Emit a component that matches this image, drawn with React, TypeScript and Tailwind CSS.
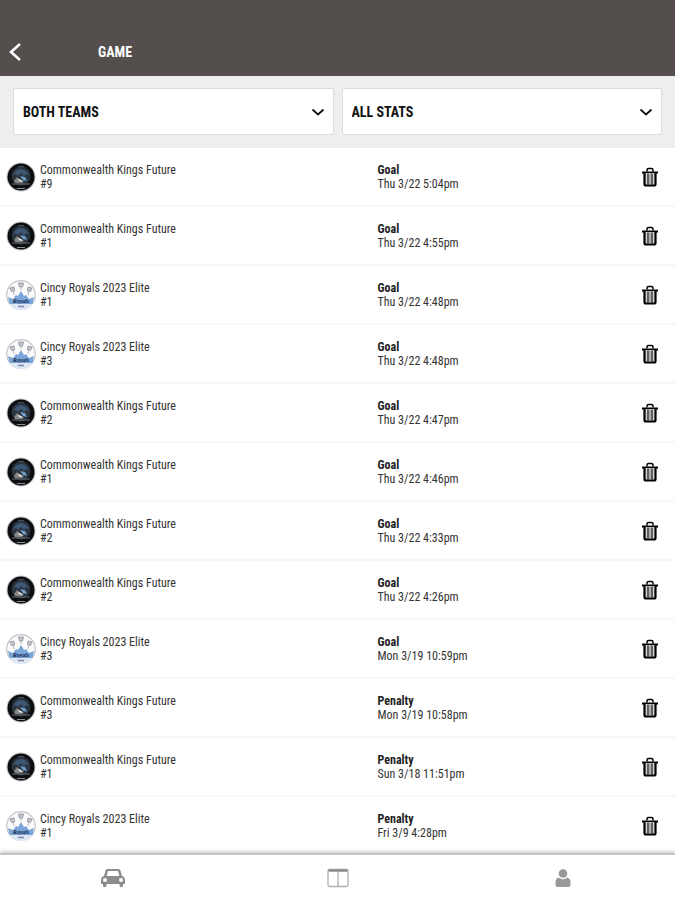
import { useState } from "react";

type Team = "kings" | "royals";

const teamNames = {
  kings: "Commonwealth Kings Future",
  royals: "Cincy Royals 2023 Elite",
};

const initialStats: { id: number; team: Team; player: number; type: string; time: string }[] = [
  { id: 1, team: "kings", player: 9, type: "Goal", time: "Thu 3/22 5:04pm" },
  { id: 2, team: "kings", player: 1, type: "Goal", time: "Thu 3/22 4:55pm" },
  { id: 3, team: "royals", player: 1, type: "Goal", time: "Thu 3/22 4:48pm" },
  { id: 4, team: "royals", player: 3, type: "Goal", time: "Thu 3/22 4:48pm" },
  { id: 5, team: "kings", player: 2, type: "Goal", time: "Thu 3/22 4:47pm" },
  { id: 6, team: "kings", player: 1, type: "Goal", time: "Thu 3/22 4:46pm" },
  { id: 7, team: "kings", player: 2, type: "Goal", time: "Thu 3/22 4:33pm" },
  { id: 8, team: "kings", player: 2, type: "Goal", time: "Thu 3/22 4:26pm" },
  { id: 9, team: "royals", player: 3, type: "Goal", time: "Mon 3/19 10:59pm" },
  { id: 10, team: "kings", player: 3, type: "Penalty", time: "Mon 3/19 10:58pm" },
  { id: 11, team: "kings", player: 1, type: "Penalty", time: "Sun 3/18 11:51pm" },
  { id: 12, team: "royals", player: 1, type: "Penalty", time: "Fri 3/9 4:28pm" },
];

const KingsLogo = () => (
  <svg viewBox="0 0 30 30" className="size-[30px] shrink-0" aria-hidden="true">
    <circle cx="15" cy="15" r="14.5" fill="#c9c9c9" />
    <circle cx="15" cy="15" r="13.5" fill="#0d0e12" />
    <circle cx="15" cy="14" r="9.5" fill="#2a333e" />
    <path d="M7 13c2-4 5-6 8-6s6 2 8 6l-3-1-2 2-3-3-3 3-2-2z" fill="#3d5874" />
    <path d="M14 14l5 1 2 4-4-1z" fill="#6f9fcc" />
    <path d="M8 19l3-4 4 3 3 1-2 2H9z" fill="#858584" />
    <path d="M12 17l3 1 2 2-4-1z" fill="#f1f1f1" />
    <path d="M6 22h18" stroke="#6d7075" strokeWidth="1" />
    <path d="M11 26.500h8" stroke="#8b8e92" strokeWidth="1" />
    <path d="M12 4.500h6" stroke="#4a4f57" strokeWidth="1" />
  </svg>
);

const RoyalsLogo = () => (
  <svg viewBox="0 0 30 30" className="size-[30px] shrink-0" aria-hidden="true">
    <circle cx="15" cy="15" r="14.300" fill="#fbfbfc" stroke="#c0c3c7" strokeWidth="1.200" />
    <path d="M2 17l5 2 3-4 2 1 3-5 3 5 2-1 3 4 5-2-1.500 7h-23z" fill="#7ba6da" />
    <path d="M3.500 24h23a13.500 13.500 0 0 1-23 0z" fill="#dfe7f4" />
    <g fill="#c4c7cb" stroke="#8b8f94" strokeWidth="0.800">
      <path d="M12.500 3h5l-1 4h-3zM4 8l4-1 .5 4-3 .5zM26 8l-4-1-.5 4 3 .5z" />
    </g>
    <path d="M15 7v3M7 11l1 4M23 11l-1 4" stroke="#b4b8bd" strokeWidth="1" />
    <text
      x="15"
      y="23"
      textAnchor="middle"
      fill="#14264a"
      className="font-['Liberation_Serif',serif] text-[6px] font-bold italic"
    >
      Royals
    </text>
    <path d="M12 26.500h6" stroke="#7d84b0" strokeWidth="1.500" />
  </svg>
);

const TrashIcon = () => (
  <svg viewBox="0 0 18 20" className="h-5 w-[18px]" fill="none" stroke="#000" aria-hidden="true">
    <path d="M6 4.500V3Q6 1.500 7.500 1.500h3Q12 1.500 12 3v1.500" strokeWidth="1.500" />
    <path d="M1 5.500h16" strokeWidth="2" />
    <path d="M3.500 6v11q0 1.500 1.500 1.500h8q1.500 0 1.500-1.500V6" fill="#d4d4d4" strokeWidth="2.200" />
    <path d="M7 6.500v11M11 6.500v11" strokeWidth="1.100" />
    <path d="M9 6.500v11" stroke="#888" strokeWidth="1" />
  </svg>
);

const Chevron = () => (
  <svg
    viewBox="0 0 14 8"
    className="pointer-events-none absolute top-1/2 right-[9px] h-2 w-[14px] -translate-y-1/2"
    fill="none"
    stroke="#111"
    strokeWidth="1.800"
    aria-hidden="true"
  >
    <path d="M1.500 1.500L7 6.500l5.500-5" />
  </svg>
);

const Filter = ({ label, options }: { label: string; options: string[] }) => (
  <div className="relative flex-1">
    <select
      aria-label={label}
      className="h-[47px] w-full appearance-none rounded-xs border border-[#dcdcdc] bg-white px-[9px] text-sm font-bold text-[#111]"
    >
      {options.map((option) => (
        <option key={option}>{option}</option>
      ))}
    </select>
    <Chevron />
  </div>
);

const App = () => {
  const [stats, setStats] = useState(initialStats);

  const deleteStat = (id: number) => setStats(stats.filter((s) => s.id !== id));

  return (
    <div className="flex h-screen flex-col bg-white font-['Roboto_Condensed','Roboto',sans-serif] text-[#333]">
      <header className="flex h-[76px] shrink-0 items-end bg-[#544e4d] pb-3 text-white">
        <button aria-label="Back" className="flex h-6 w-[98px] items-center pl-2">
          <svg viewBox="0 0 14 20" className="h-5 w-[14px]" fill="none" stroke="#fff" strokeWidth="2.600" aria-hidden="true">
            <path d="M12 2L3 10l9 8" />
          </svg>
        </button>
        <h1 className="text-sm leading-6 font-bold">GAME</h1>
      </header>

      <div className="flex shrink-0 gap-2 bg-[#eee] px-[13px] pt-3 pb-[13px]">
        <Filter label="Team" options={["BOTH TEAMS", "COMMONWEALTH KINGS FUTURE", "CINCY ROYALS 2023 ELITE"]} />
        <Filter label="Stat type" options={["ALL STATS", "GOAL", "PENALTY"]} />
      </div>

      <ul className="min-h-0 flex-1 overflow-y-auto [scrollbar-width:none]">
        {stats.map((stat) => (
          <li
            key={stat.id}
            className="grid h-[59px] grid-cols-2 items-center border-b-2 border-[#f7f7f7] text-xs leading-[14px]"
          >
            <div className="flex items-center gap-1 pl-[6px]">
              {stat.team === "kings" ? <KingsLogo /> : <RoyalsLogo />}
              <div>
                <p>{teamNames[stat.team]}</p>
                <p>#{stat.player}</p>
              </div>
            </div>
            <div className="flex items-center justify-between pr-4 pl-10">
              <div>
                <p className="font-bold text-[#222]">{stat.type}</p>
                <p>{stat.time}</p>
              </div>
              <button aria-label="Delete stat" onClick={() => deleteStat(stat.id)}>
                <TrashIcon />
              </button>
            </div>
          </li>
        ))}
      </ul>

      <nav className="z-10 grid h-[47px] shrink-0 grid-cols-3 items-center justify-items-center border-t-2 border-[#c4c4c4] bg-white shadow-[0_-1px_4px_rgba(0,0,0,0.25)]">
        <a href="#games" aria-label="Games">
          <svg viewBox="0 0 26 20" className="h-5 w-[26px]" aria-hidden="true">
            <path
              fill="#8c8c8c"
              fillRule="evenodd"
              d="M7.500 1h11q1.500 0 2 1.500L22 8q3 .8 3 4v4h-2v1.500a1.700 1.700 0 0 1-3.500 0V16h-13v1.500a1.700 1.700 0 0 1-3.500 0V16H1v-4q0-3.200 3-4l1.500-5.500Q6 1 7.500 1zM8 3L6.600 8h12.800L18 3zM5 10a2 2 0 1 0 0 4 2 2 0 0 0 0-4zm16 0a2 2 0 1 0 0 4 2 2 0 0 0 0-4z"
            />
          </svg>
        </a>
        <a href="#board" aria-label="Board">
          <svg viewBox="0 0 22 20" className="h-5 w-[22px]" fill="none" stroke="#b0b0b0" strokeWidth="1.300" aria-hidden="true">
            <rect x="1" y="1.500" width="20" height="17" rx="1.500" />
            <path d="M11 3v15" />
            <path d="M1.500 2.500h19" stroke="#8c8c8c" strokeWidth="2.500" />
          </svg>
        </a>
        <a href="#profile" aria-label="Profile">
          <svg viewBox="0 0 16 20" className="h-5 w-4" fill="#999" aria-hidden="true">
            <circle cx="8" cy="5.500" r="4.300" />
            <path d="M3.500 9.500Q8 13 12.500 9.500q3 1 3 5v2.500q0 2-2 2h-11q-2 0-2-2v-2.500q0-4 3-5z" />
          </svg>
        </a>
      </nav>
    </div>
  );
};

export default App;
